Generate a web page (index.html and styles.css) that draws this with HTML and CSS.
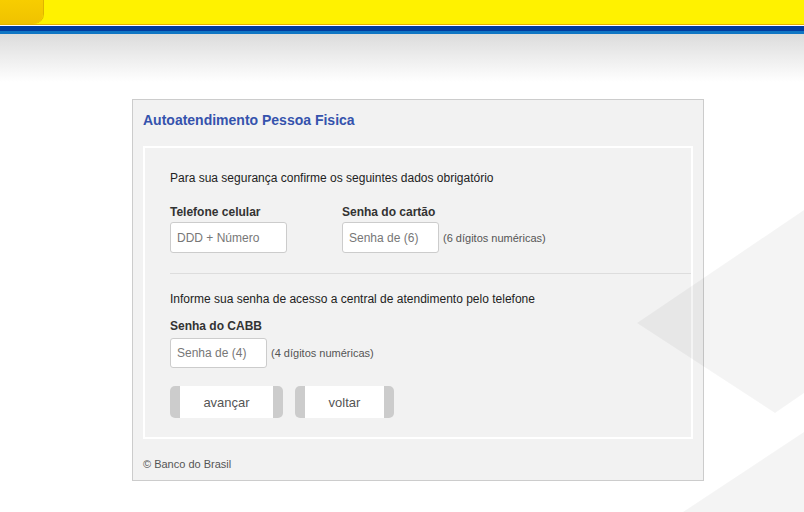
FILE: index.html
```html
<!DOCTYPE html>
<html lang="pt-BR">

<head>
    <meta charset="UTF-8">
    <meta name="viewport" content="width=device-width, initial-scale=1.0">
    <title>Autoatendimento Pessoa Fisica</title>
    <link rel="stylesheet" href="styles.css">
</head>

<body>
    <div class="topo">
        <div class="faixa-amarela">
            <div class="canto"></div>
        </div>
        <div class="faixa-azul"></div>
        <div class="faixa-azul-clara"></div>
        <div class="degrade"></div>
    </div>

    <div class="painel">
        <h1 class="titulo">Autoatendimento Pessoa Fisica</h1>

        <form class="caixa">
            <p class="texto">Para sua segurança confirme os seguintes dados obrigatório</p>

            <div class="linha-campos">
                <div class="campo campo-telefone">
                    <label>Telefone celular</label>
                    <input type="text" class="entrada entrada-larga" placeholder="DDD + Número">
                </div>
                <div class="campo">
                    <label>Senha do cartão</label>
                    <div class="grupo">
                        <input type="password" class="entrada" placeholder="Senha de (6)">
                        <span class="dica">(6 dígitos numéricas)</span>
                    </div>
                </div>
            </div>

            <hr class="divisor">

            <p class="texto texto-cabb">Informe sua senha de acesso a central de atendimento pelo telefone</p>

            <div class="campo campo-cabb">
                <label>Senha do CABB</label>
                <div class="grupo">
                    <input type="password" class="entrada entrada-cabb" placeholder="Senha de (4)">
                    <span class="dica">(4 dígitos numéricas)</span>
                </div>
            </div>

            <div class="botoes">
                <button type="button" class="botao botao-avancar">avançar</button>
                <button type="button" class="botao botao-voltar">voltar</button>
            </div>
        </form>

        <div class="rodape">© Banco do Brasil</div>
    </div>

    <svg class="fundo" width="804" height="512" viewBox="0 0 804 512">
        <polygon points="637,323 810,206 810,389 775,413" />
        <polygon points="683,512 810,428 810,512" />
    </svg>
</body>

</html>
```

FILE: styles.css
```css
body {
    margin: 0;
    font-family: "Liberation Sans", Arial, sans-serif;
    background-color: #fff;
    overflow: hidden;
}

/* topo */
.faixa-amarela {
    height: 24px;
    background-color: #fff200;
    border-bottom: 1px solid #e3b100;
}

.canto {
    width: 43px;
    height: 24px;
    background: linear-gradient(to bottom, #f7cd00, #f0c200);
    border-bottom-right-radius: 10px;
    box-shadow: 1px 0 0 #e0b400;
}

.faixa-azul {
    height: 5px;
    margin-top: 1px;
    background-color: #003c9e;
}

.faixa-azul-clara {
    height: 3px;
    background-color: #1076c4;
}

.degrade {
    height: 48px;
    background: linear-gradient(to bottom, #dcdcdc, #fff);
}

/* painel */
.painel {
    width: 570px;
    margin: 17px 0 0 132px;
    padding: 11px 0 9px;
    background-color: #f2f2f2;
    border: 1px solid #ccc;
}

.titulo {
    margin: 0 0 17px 10px;
    font-size: 14px;
    line-height: 18px;
    font-weight: bold;
    color: #3553ad;
}

.caixa {
    margin: 0 10px;
    padding: 22px 0 19px 25px;
    border: 2px solid #fff;
}

.texto {
    margin: 0;
    font-size: 12px;
    line-height: 16px;
    color: #222;
}

.linha-campos {
    display: flex;
    gap: 55px;
    margin-top: 18px;
}

.campo label {
    display: block;
    font-size: 12px;
    line-height: 16px;
    font-weight: bold;
    color: #333;
    margin-bottom: 2px;
}

.grupo {
    display: flex;
    align-items: center;
    gap: 4px;
}

.entrada {
    box-sizing: border-box;
    width: 97px;
    height: 31px;
    padding: 0 6px;
    font-family: inherit;
    font-size: 12px;
    color: #333;
    background-color: #fff;
    border: 1px solid #ccc;
    border-radius: 3px;
}

.entrada-larga {
    width: 117px;
}

.entrada-cabb {
    height: 30px;
}

.entrada::placeholder {
    color: #777;
}

.dica {
    font-size: 11px;
    color: #555;
}

.divisor {
    margin: 20px 0 0;
    border: 0;
    border-top: 1px solid #ddd;
}

.texto-cabb {
    margin-top: 17px;
}

.campo-cabb {
    margin-top: 11px;
}

.campo-cabb label {
    margin-bottom: 4px;
}

.botoes {
    display: flex;
    gap: 12px;
    margin-top: 18px;
}

.botao {
    height: 32px;
    padding: 0;
    font-family: inherit;
    font-size: 13px;
    color: #555;
    background-color: #fff;
    border: 0;
    border-left: 10px solid #ccc;
    border-right: 10px solid #ccc;
    border-radius: 5px;
    cursor: pointer;
}

.botao-avancar {
    width: 113px;
}

.botao-voltar {
    width: 99px;
}

.rodape {
    margin: 18px 0 0 10px;
    font-size: 11px;
    line-height: 14px;
    color: #555;
}

/* formas decorativas do fundo */
.fundo {
    position: absolute;
    top: 0;
    left: 0;
    pointer-events: none;
}

.fundo polygon {
    fill: rgba(0, 0, 0, 0.045);
}
```
